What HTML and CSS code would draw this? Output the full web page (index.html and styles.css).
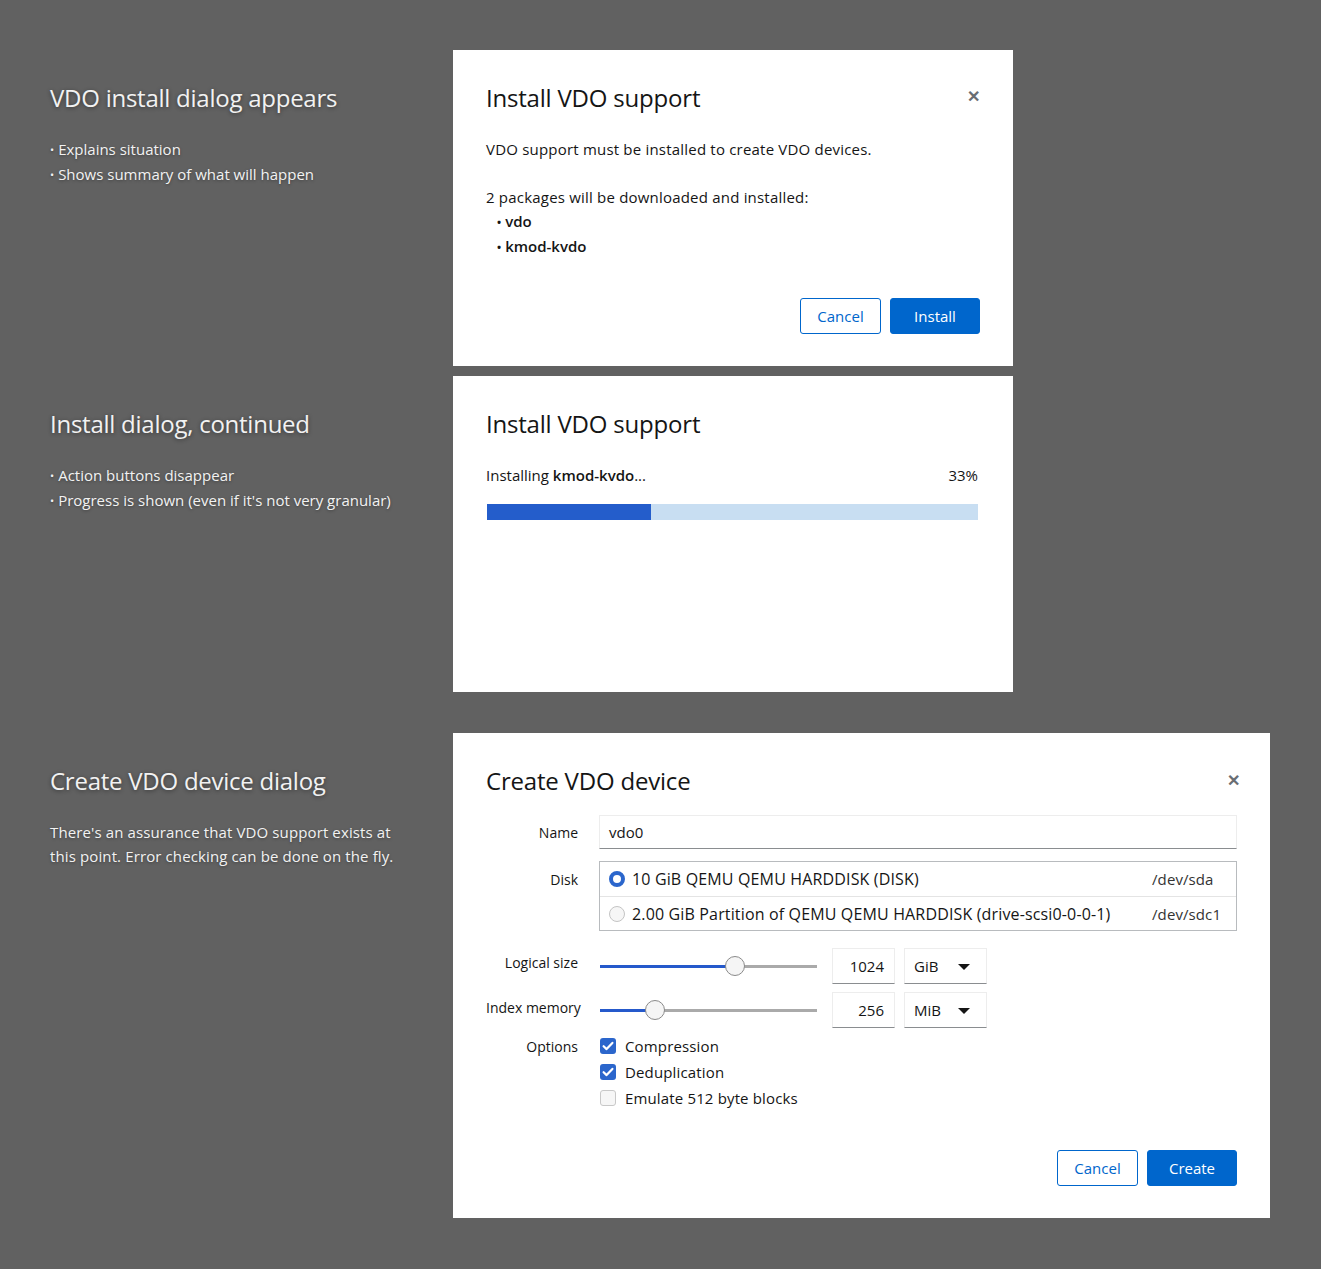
FILE: index.html
```html
<!DOCTYPE html>
<html>
<head>
<meta charset="utf-8">
<link rel="stylesheet" href="styles.css">
</head>
<body>
<div class="page">

  <section class="row row-1">
    <div class="note">
      <h2 class="note-title">VDO install dialog appears</h2>
      <ul class="note-list">
        <li>Explains situation</li>
        <li>Shows summary of what will happen</li>
      </ul>
    </div>
    <div class="dialog dialog-small">
      <div class="dialog-head">
        <h1 class="dialog-title">Install VDO support</h1>
        <span class="close">&#x2715;</span>
      </div>
      <p class="para">VDO support must be installed to create VDO devices.</p>
      <p class="para">2 packages will be downloaded and installed:</p>
      <ul class="pkg-list">
        <li>vdo</li>
        <li>kmod-kvdo</li>
      </ul>
      <div class="actions actions-1">
        <button class="btn btn-secondary">Cancel</button>
        <button class="btn btn-primary btn-install">Install</button>
      </div>
    </div>
  </section>

  <section class="row row-2">
    <div class="note">
      <h2 class="note-title">Install dialog, continued</h2>
      <ul class="note-list">
        <li>Action buttons disappear</li>
        <li>Progress is shown (even if it's not very granular)</li>
      </ul>
    </div>
    <div class="dialog dialog-small dialog-progress">
      <div class="dialog-head">
        <h1 class="dialog-title">Install VDO support</h1>
      </div>
      <div class="progress-row">
        <span>Installing <b>kmod-kvdo</b>...</span>
        <span>33%</span>
      </div>
      <div class="progress-bar"><div class="progress-fill" style="width: 33.5%"></div></div>
    </div>
  </section>

  <section class="row row-3">
    <div class="note">
      <h2 class="note-title">Create VDO device dialog</h2>
      <p class="note-text">There's an assurance that VDO support exists at this point. Error checking can be done on the fly.</p>
    </div>
    <div class="dialog dialog-large">
      <div class="dialog-head">
        <h1 class="dialog-title">Create VDO device</h1>
        <span class="close close-large">&#x2715;</span>
      </div>
      <div class="form">
        <label class="flabel lbl-name">Name</label>
        <div class="text-input">vdo0</div>

        <label class="flabel lbl-disk">Disk</label>
        <div class="disk-list">
          <div class="disk-row">
            <span class="radio radio-on"></span>
            <span class="disk-name">10 GiB QEMU QEMU HARDDISK (DISK)</span>
            <span class="disk-dev">/dev/sda</span>
          </div>
          <div class="disk-row">
            <span class="radio"></span>
            <span class="disk-name">2.00 GiB Partition of QEMU QEMU HARDDISK (drive-scsi0-0-0-1)</span>
            <span class="disk-dev">/dev/sdc1</span>
          </div>
        </div>

        <label class="flabel lbl-size lbl-size-1">Logical size</label>
        <div class="size-row size-row-1">
          <div class="slider"><div class="slider-fill" style="width: 62%"></div><span class="thumb" style="left: 62%"></span></div>
          <div class="num-input">1024</div>
          <div class="unit-select">GiB<span class="caret"></span></div>
        </div>

        <label class="flabel lbl-size lbl-size-2">Index memory</label>
        <div class="size-row size-row-2">
          <div class="slider"><div class="slider-fill" style="width: 25.5%"></div><span class="thumb" style="left: 25.5%"></span></div>
          <div class="num-input">256</div>
          <div class="unit-select">MiB<span class="caret"></span></div>
        </div>

        <label class="flabel lbl-opts">Options</label>
        <div class="options">
          <div class="opt"><span class="check check-on"><svg viewBox="0 0 16 16" width="16" height="16"><path d="M3.6 8.2 L6.6 11.1 L12.4 4.9" fill="none" stroke="#fff" stroke-width="2.2" stroke-linecap="round" stroke-linejoin="round"/></svg></span>Compression</div>
          <div class="opt"><span class="check check-on"><svg viewBox="0 0 16 16" width="16" height="16"><path d="M3.6 8.2 L6.6 11.1 L12.4 4.9" fill="none" stroke="#fff" stroke-width="2.2" stroke-linecap="round" stroke-linejoin="round"/></svg></span>Deduplication</div>
          <div class="opt"><span class="check"></span>Emulate 512 byte blocks</div>
        </div>
      </div>
      <div class="actions actions-3">
        <button class="btn btn-secondary">Cancel</button>
        <button class="btn btn-primary btn-create">Create</button>
      </div>
    </div>
  </section>

</div>
</body>
</html>
```

FILE: styles.css
```css
* { box-sizing: border-box; }

html, body {
  margin: 0;
  padding: 0;
}

body {
  background: #616161;
  font-family: "Open Sans", "Noto Sans", sans-serif;
  color: #151515;
  width: 1321px;
  height: 1269px;
  overflow: hidden;
}

.page {
  padding-top: 50px;
  display: flex;
  flex-direction: column;
}

.row {
  display: flex;
  align-items: flex-start;
}

.row-2 { margin-top: 10px; }
.row-3 { margin-top: 41px; }

.note {
  width: 453px;
  padding-left: 50px;
  padding-top: 33px;
  color: #f2f2f2;
}

.note-title {
  margin: 0;
  font-weight: 400;
  font-size: 24px;
  line-height: 30px;
  letter-spacing: -0.25px;
  text-shadow: 0 1px 4px rgba(0,0,0,0.45);
}

.note-list {
  list-style: none;
  margin: 24px 0 0;
  padding: 0;
  font-size: 15px;
  line-height: 24px;
  letter-spacing: 0;
  text-shadow: 0 1px 3px rgba(0,0,0,0.35);
}

.note-list li::before {
  content: "\2022";
  font-size: 11px;
  margin-right: 4px;
  vertical-align: 1px;
}

.note-text {
  margin: 24px 0 0;
  font-size: 15px;
  line-height: 24px;
  letter-spacing: 0.12px;
  width: 360px;
  text-shadow: 0 1px 3px rgba(0,0,0,0.35);
}

.dialog {
  background: #fff;
  padding: 33px 33px 32px 33px;
}

.dialog-small { width: 560px; height: 316px; }
.dialog-large { width: 817px; height: 485px; }

.dialog-head {
  display: flex;
  justify-content: space-between;
  align-items: center;
  height: 30px;
}

.dialog-title {
  margin: 0;
  font-weight: 400;
  font-size: 24px;
  line-height: 30px;
  letter-spacing: -0.2px;
  color: #151515;
}

.close {
  color: #6a6e73;
  font-size: 16px;
  font-weight: 700;
  width: 14px;
  text-align: center;
  line-height: 14px;
  margin-top: -4px;
}

.close-large { margin-right: -3px; margin-top: -2px; }

.para {
  margin: 24px 0 0;
  font-size: 15px;
  line-height: 24px;
  letter-spacing: 0.2px;
}

.pkg-list {
  list-style: none;
  margin: 0;
  padding: 0 0 0 11px;
  font-size: 15px;
  line-height: 24px;
  font-weight: 600;
}

.pkg-list li::before {
  content: "\2022";
  font-size: 11px;
  margin-right: 4px;
  vertical-align: 1px;
  font-weight: 700;
}

.actions {
  display: flex;
  justify-content: flex-end;
  gap: 9px;
}

.actions-1 { margin-top: 39px; }

.btn {
  font-family: inherit;
  font-size: 15px;
  height: 36px;
  border-radius: 3px;
  padding: 0;
  cursor: pointer;
}

.btn-secondary {
  width: 81px;
  background: #fff;
  border: 1px solid #0066cc;
  color: #0066cc;
}

.btn-primary {
  background: #0066cc;
  border: 1px solid #0066cc;
  color: #fff;
}

.btn-install { width: 90px; }
.btn-create { width: 90px; }

.dialog-progress { padding-right: 35px; }

.progress-row {
  margin-top: 24px;
  display: flex;
  justify-content: space-between;
  font-size: 15px;
  line-height: 24px;
}

.progress-row b { font-weight: 600; }

.progress-bar {
  margin-top: 17px;
  margin-left: 1px;
  height: 16px;
  background: #c8def2;
}

.progress-fill {
  height: 100%;
  background: #245dcb;
}

.form {
  margin-top: 19px;
  display: grid;
  grid-template-columns: 92px 638px;
  column-gap: 21px;
  row-gap: 12px;
  align-items: center;
  font-size: 15px;
}

.flabel {
  text-align: right;
  font-size: 14px;
  color: #151515;
  white-space: nowrap;
}

.lbl-disk { align-self: start; padding-top: 9px; }
.lbl-opts { align-self: start; margin-top: -3px; }
.lbl-size-1 { margin-top: -2px; }
.lbl-size-2 { margin-top: -10px; }

.text-input {
  height: 34px;
  border: 1px solid #ededed;
  border-bottom: 1px solid #8a8d90;
  padding: 0 9px;
  line-height: 32px;
}

.disk-list {
  border: 1px solid #b8bbbe;
}

.disk-row {
  height: 34px;
  display: flex;
  align-items: center;
  padding: 0 0 0 9px;
  font-size: 16px;
  letter-spacing: 0.15px;
}

.disk-row + .disk-row { border-top: 1px solid #e4e4e4; }

.disk-name { flex: 1; margin-left: 7px; }
.disk-dev { color: #333; width: 84px; flex: none; letter-spacing: 0.1px; font-size: 15px; }

.radio {
  width: 16px;
  height: 16px;
  border-radius: 50%;
  border: 1px solid #c4c4c4;
  background: #f6f6f6;
  flex: none;
}

.radio-on {
  border: 4px solid #2b66cc;
  background: #fff;
}

.size-row {
  display: flex;
  align-items: center;
}

.size-row-1 { margin-top: 5px; }
.size-row-2 { margin-top: -4px; }

.slider {
  position: relative;
  width: 217px;
  height: 3px;
  background: #aaaaaa;
  margin-left: 1px;
  margin-right: 15px;
}

.slider-fill {
  height: 100%;
  background: #2559cb;
}

.thumb {
  position: absolute;
  top: 50%;
  width: 20px;
  height: 20px;
  margin-left: -10px;
  margin-top: -10px;
  border-radius: 50%;
  background: #f5f5f5;
  border: 1px solid #8a8a8a;
}

.num-input {
  width: 63px;
  height: 36px;
  border: 1px solid #ededed;
  border-bottom: 1px solid #8a8d90;
  text-align: right;
  padding-right: 10px;
  line-height: 34px;
}

.unit-select {
  width: 83px;
  height: 36px;
  margin-left: 9px;
  border: 1px solid #ededed;
  border-bottom: 1px solid #8a8d90;
  padding-left: 9px;
  line-height: 34px;
  position: relative;
}

.caret {
  position: absolute;
  left: 53px;
  top: 15px;
  width: 0;
  height: 0;
  border-left: 6px solid transparent;
  border-right: 6px solid transparent;
  border-top: 6px solid #151515;
}

.options {
  display: flex;
  flex-direction: column;
  margin-top: -7px;
}

.opt {
  height: 26px;
  display: flex;
  align-items: center;
  letter-spacing: 0.15px;
}

.check {
  width: 16px;
  height: 16px;
  border-radius: 3px;
  border: 1px solid #c8c8c8;
  background: #f6f6f6;
  margin-left: 1px;
  margin-right: 9px;
  flex: none;
  display: flex;
}

.check-on {
  border: none;
  background: #2b66cc;
}

.actions-3 {
  margin-top: 39px;
}
```
